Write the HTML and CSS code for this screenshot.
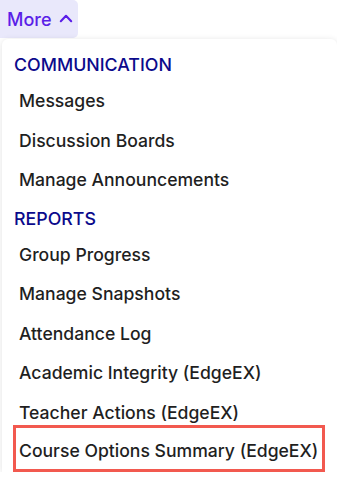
FILE: index.html
```html
<!DOCTYPE html>
<html lang="en">
  <head>
    <meta charset="UTF-8" />
    <meta name="viewport" content="width=device-width, initial-scale=1.0" />
    <title>More menu</title>
    <link rel="stylesheet" href="styles.css">
  </head>
  <body>
    <button class="more-btn">
      More
      <svg class="caret" width="14" height="14" viewBox="0 0 14 14">
        <path d="M1.8 10.2 L7 4.8 L12.2 10.2" fill="none" stroke="currentColor" stroke-width="2.1" stroke-linecap="round" stroke-linejoin="round" />
      </svg>
    </button>
    <div class="menu">
      <div class="group-title">COMMUNICATION</div>
      <a class="item">Messages</a>
      <a class="item">Discussion Boards</a>
      <a class="item">Manage Announcements</a>
      <div class="group-title">REPORTS</div>
      <a class="item">Group Progress</a>
      <a class="item">Manage Snapshots</a>
      <a class="item">Attendance Log</a>
      <a class="item">Academic Integrity (EdgeEX)</a>
      <a class="item">Teacher Actions (EdgeEX)</a>
      <a class="item highlight">Course Options Summary (EdgeEX)</a>
    </div>
  </body>
</html>
```

FILE: styles.css
```css
body {
  margin: 0;
  font-family: Inter, "Noto Sans", sans-serif;
  background: #fff;
  overflow: hidden;
}

.more-btn {
  display: flex;
  align-items: center;
  gap: 7px;
  width: 78px;
  height: 38px;
  padding: 0 0 0 7px;
  border: none;
  border-radius: 0 5px 5px 0;
  background: #e9e8fb;
  color: #5b1fe8;
  font-family: inherit;
  font-size: 18px;
  font-weight: 500;
}

.caret {
  margin-top: -2px;
}

.menu {
  margin: 1px 0 0 2px;
  background: #fff;
  border-radius: 6px 6px 0 0;
  box-shadow: 0 1px 6px rgba(0, 0, 0, 0.12);
  padding: 14px 0 0 0;
  display: flex;
  flex-direction: column;
}

.group-title {
  padding: 0 12px;
  height: 24px;
  line-height: 24px;
  color: #0b0a8c;
  font-size: 17.8px;
  font-weight: 500;
}

.item {
  margin: 0 12px 0 11px;
  padding: 0 3px;
  height: 39.5px;
  line-height: 39.5px;
  color: #1f1f1f;
  font-size: 17.6px;
  font-weight: 500;
  border: 3px solid transparent;
  box-sizing: border-box;
}

.group-title + .item {
  margin-top: 1px;
}

.item + .group-title {
  margin-top: 10px;
}

.highlight {
  margin-top: -4px;
  border-color: #f2594f;
  height: 47px;
  padding-top: 6px;
  line-height: 34px;
}
```
